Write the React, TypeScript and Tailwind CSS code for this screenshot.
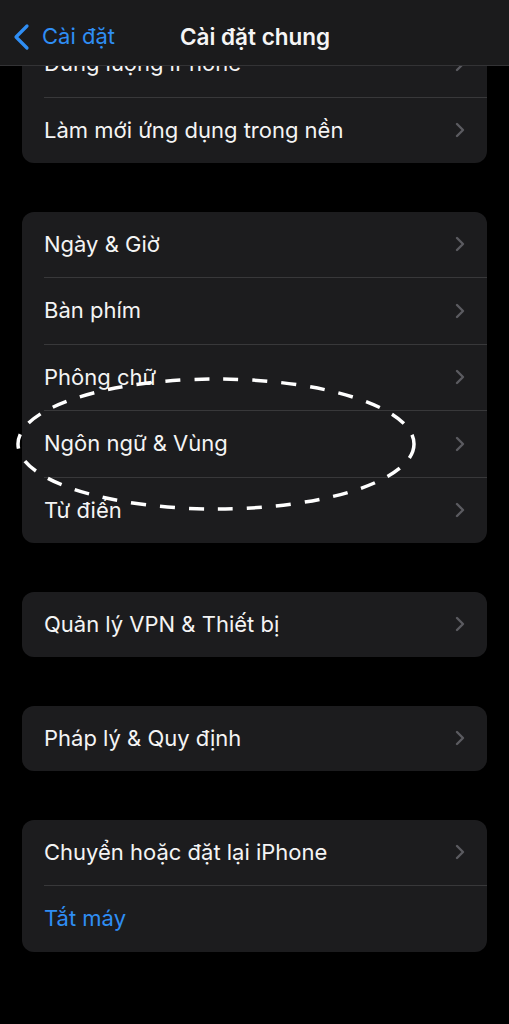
import React from "react";

type Row = { label: string; blue?: boolean; chevron?: boolean };

const groups: Row[][] = [
  [{ label: "Dung lượng iPhone" }, { label: "Làm mới ứng dụng trong nền" }],
  [
    { label: "Ngày & Giờ" },
    { label: "Bàn phím" },
    { label: "Phông chữ" },
    { label: "Ngôn ngữ & Vùng" },
    { label: "Từ điển" },
  ],
  [{ label: "Quản lý VPN & Thiết bị" }],
  [{ label: "Pháp lý & Quy định" }],
  [{ label: "Chuyển hoặc đặt lại iPhone" }, { label: "Tắt máy", blue: true, chevron: false }],
];

function Chevron() {
  return (
    <svg width="12" height="18" viewBox="0 0 12 18" className="shrink-0">
      <path d="M3 3l6 6-6 6" fill="none" stroke="#5b5b60" strokeWidth="2.4" strokeLinecap="round" strokeLinejoin="round" />
    </svg>
  );
}

function Group({ rows }: { rows: Row[] }) {
  return (
    <div className="mx-[22px] rounded-[12px] bg-[#1c1c1e] overflow-hidden">
      {rows.map((r, i) => (
        <div key={r.label} className="pl-[22px]">
          {i > 0 && <div className="h-px bg-[#38383a]" />}
          <div className="h-[65.5px] flex items-center pr-[21px]">
            <span className={`flex-1 text-[22px] ${r.blue ? "text-[#2f8ef4]" : "text-[#f4f4f4]"}`}>{r.label}</span>
            {r.chevron !== false && <Chevron />}
          </div>
        </div>
      ))}
    </div>
  );
}

export default function App() {
  return (
    <div className="relative min-h-[1024px] bg-black overflow-hidden" style={{ fontFamily: "Inter, 'Noto Sans', sans-serif" }}>
      {/* header over scrolled content */}
      <div className="absolute top-0 left-0 right-0 z-10 h-[66px] bg-[#1b1b1c] border-b border-[#333335] flex items-center pt-[8px]">
        <div className="flex items-center pl-[12px] w-[180px]">
          <svg width="18" height="28" viewBox="0 0 18 28">
            <path d="M15 3L4 14l11 11" fill="none" stroke="#2f8ef4" strokeWidth="3.2" strokeLinecap="round" strokeLinejoin="round" />
          </svg>
          <span className="ml-[12px] text-[22px] text-[#2f8ef4]">Cài đặt</span>
        </div>
        <span className="text-[22.5px] font-semibold text-[#f5f5f5]">Cài đặt chung</span>
      </div>

      <div className="pt-[31px] flex flex-col gap-[48.5px]">
        {groups.map((g, i) => (
          <Group key={i} rows={g} />
        ))}
      </div>

      {/* hand-drawn annotation */}
      <svg className="absolute left-0 top-0 pointer-events-none" width="509" height="1024">
        <ellipse cx="216" cy="444" rx="198" ry="65" fill="none" stroke="#ffffff" strokeWidth="3.5" strokeDasharray="15 14" />
      </svg>
    </div>
  );
}
